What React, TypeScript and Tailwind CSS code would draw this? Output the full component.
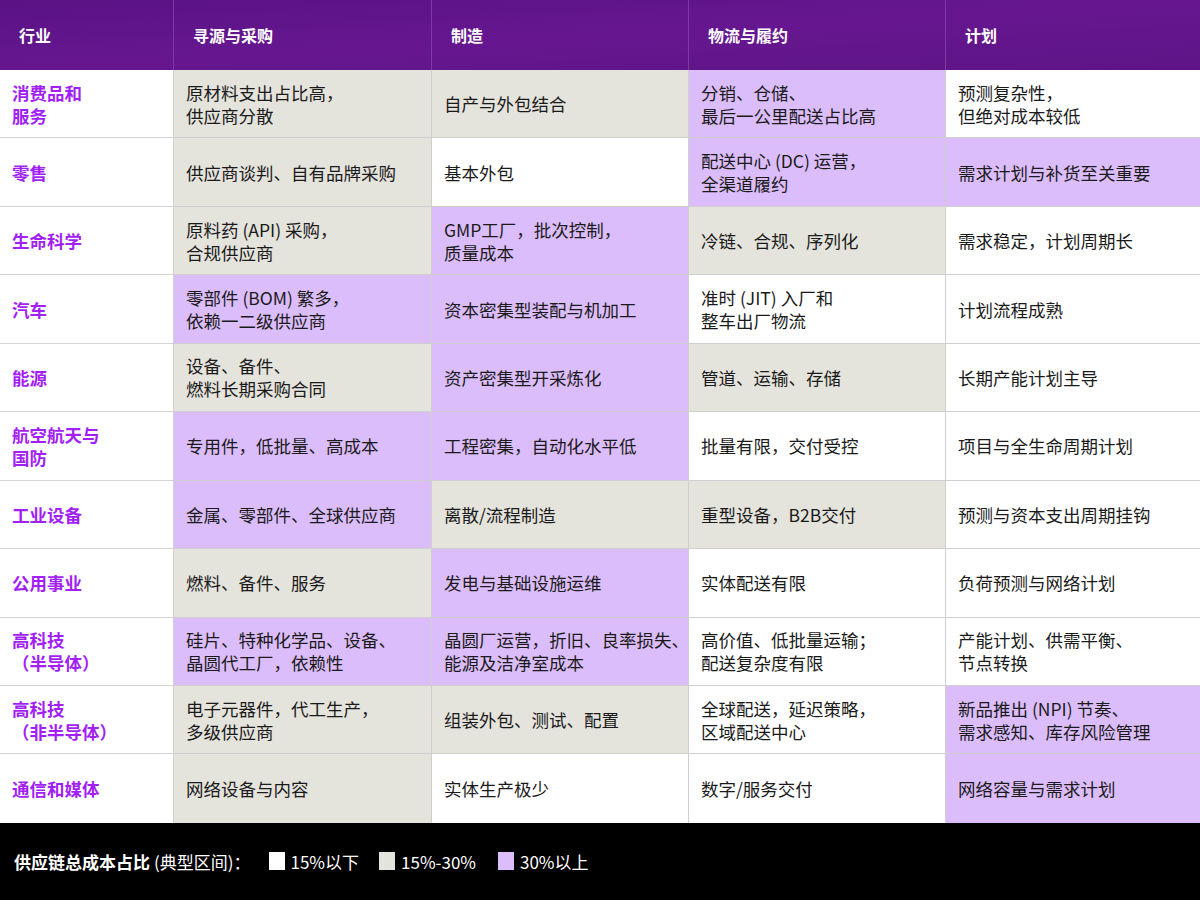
import React from "react";

const W = "bg-white", G = "bg-[#e4e3dc]", P = "bg-[#dcbdfc]";
type Row = [string[], [string[], string][]];
const rows: Row[] = [
  [["消费品和", "服务"], [[["原材料支出占比高，", "供应商分散"], G], [["自产与外包结合"], G], [["分销、仓储、", "最后一公里配送占比高"], P], [["预测复杂性，", "但绝对成本较低"], W]]],
  [["零售"], [[["供应商谈判、自有品牌采购"], G], [["基本外包"], W], [["配送中心 (DC) 运营，", "全渠道履约"], P], [["需求计划与补货至关重要"], P]]],
  [["生命科学"], [[["原料药 (API) 采购，", "合规供应商"], G], [["GMP工厂，批次控制，", "质量成本"], P], [["冷链、合规、序列化"], G], [["需求稳定，计划周期长"], W]]],
  [["汽车"], [[["零部件 (BOM) 繁多，", "依赖一二级供应商"], P], [["资本密集型装配与机加工"], P], [["准时 (JIT) 入厂和", "整车出厂物流"], W], [["计划流程成熟"], W]]],
  [["能源"], [[["设备、备件、", "燃料长期采购合同"], G], [["资产密集型开采炼化"], P], [["管道、运输、存储"], G], [["长期产能计划主导"], W]]],
  [["航空航天与", "国防"], [[["专用件，低批量、高成本"], P], [["工程密集，自动化水平低"], P], [["批量有限，交付受控"], W], [["项目与全生命周期计划"], W]]],
  [["工业设备"], [[["金属、零部件、全球供应商"], P], [["离散/流程制造"], G], [["重型设备，B2B交付"], G], [["预测与资本支出周期挂钩"], W]]],
  [["公用事业"], [[["燃料、备件、服务"], G], [["发电与基础设施运维"], P], [["实体配送有限"], W], [["负荷预测与网络计划"], W]]],
  [["高科技", "（半导体）"], [[["硅片、特种化学品、设备、", "晶圆代工厂，依赖性"], P], [["晶圆厂运营，折旧、良率损失、", "能源及洁净室成本"], P], [["高价值、低批量运输；", "配送复杂度有限"], W], [["产能计划、供需平衡、", "节点转换"], W]]],
  [["高科技", "（非半导体）"], [[["电子元器件，代工生产，", "多级供应商"], G], [["组装外包、测试、配置"], G], [["全球配送，延迟策略，", "区域配送中心"], W], [["新品推出 (NPI) 节奏、", "需求感知、库存风险管理"], P]]],
  [["通信和媒体"], [[["网络设备与内容"], G], [["实体生产极少"], W], [["数字/服务交付"], W], [["网络容量与需求计划"], P]]],
];
const heads = ["行业", "寻源与采购", "制造", "物流与履约", "计划"];
const cols = "grid grid-cols-[173px_258px_257px_257px_255px]";

export default function App() {
  return (
    <div className="w-[1200px] h-[900px] flex flex-col bg-white text-[17.5px] leading-[23px] text-[#1a1a1a]" style={{ fontFamily: '"Noto Sans CJK SC", "Noto Sans", sans-serif' }}>
      <div className={`${cols} h-[70px] bg-gradient-to-br from-[#5a1284] via-[#661790] to-[#5e1486] text-white font-bold text-[16px]`}>
        {heads.map((h, i) => (
          <div key={i} className={`flex items-center pl-[19px] ${i === 0 ? "" : "border-l border-[#7d3aa3]"}`}>{h}</div>
        ))}
      </div>
      {rows.map(([name, cells], r) => (
        <div key={r} className={`${cols} h-[68.45px]`}>
          <div className={`flex flex-col justify-center pl-[12px] text-[#a21ff5] font-bold ${r < 10 ? "border-b border-[#d4d4d4]" : ""}`}>
            {name.map((l, k) => <div key={k}>{l}</div>)}
          </div>
          {cells.map(([lines, bg], c) => (
            <div key={c} className={`${bg} border-l border-[#cfcfcf] ${r < 10 ? "border-b" : ""} flex flex-col justify-center pl-[12px]`}>
              {lines.map((l, k) => <div key={k} className="whitespace-nowrap">{l}</div>)}
            </div>
          ))}
        </div>
      ))}
      <div className="flex-1 bg-black text-white flex items-center pl-[14px] text-[17px]">
        <span className="font-bold">供应链总成本占比</span>
        <span className="ml-[4px]">(典型区间)：</span>
        <span className="ml-[18px] w-[16px] h-[18px] bg-white"></span>
        <span className="ml-[6px]">15%以下</span>
        <span className="ml-[20px] w-[16px] h-[18px] bg-[#e4e3dc]"></span>
        <span className="ml-[6px]">15%-30%</span>
        <span className="ml-[22px] w-[16px] h-[18px] bg-[#dcbdfc]"></span>
        <span className="ml-[6px]">30%以上</span>
      </div>
    </div>
  );
}
